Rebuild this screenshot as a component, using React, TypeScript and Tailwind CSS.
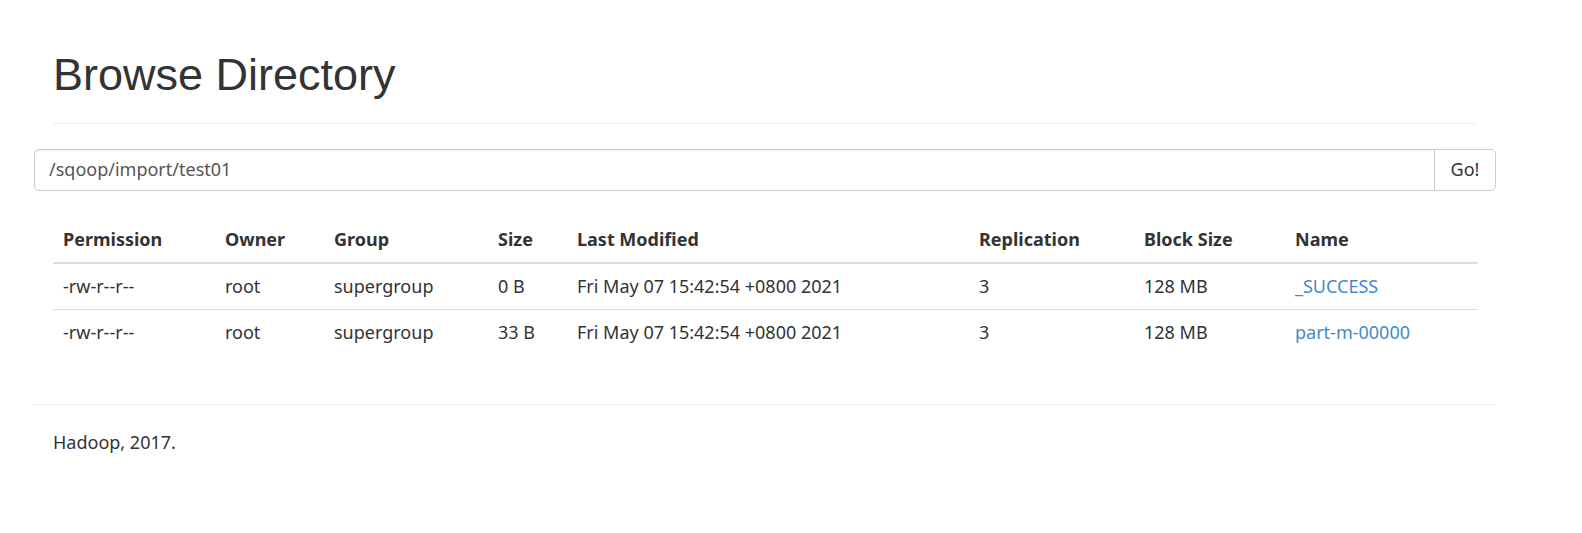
const FONT = '[font-family:"Noto_Sans","Open_Sans",sans-serif]'

const columns = [
  { label: 'Permission', width: 'w-[162px]' },
  { label: 'Owner', width: 'w-[109px]' },
  { label: 'Group', width: 'w-[164px]' },
  { label: 'Size', width: 'w-[79px]' },
  { label: 'Last Modified', width: 'w-[402px]' },
  { label: 'Replication', width: 'w-[165px]' },
  { label: 'Block Size', width: 'w-[151px]' },
  { label: 'Name', width: 'w-[193px]' },
]

const files = [
  {
    permission: '-rw-r--r--',
    owner: 'root',
    group: 'supergroup',
    size: '0 B',
    modified: 'Fri May 07 15:42:54 +0800 2021',
    replication: '3',
    blockSize: '128 MB',
    name: '_SUCCESS',
  },
  {
    permission: '-rw-r--r--',
    owner: 'root',
    group: 'supergroup',
    size: '33 B',
    modified: 'Fri May 07 15:42:54 +0800 2021',
    replication: '3',
    blockSize: '128 MB',
    name: 'part-m-00000',
  },
]

export default function App() {
  return (
    <div className={`h-[533px] overflow-hidden bg-white pt-[50px] text-[#333] text-[18px] leading-[25px] ${FONT}`}>
      <div className="ml-[34px] w-[1462px]">
        {/* page header */}
        <div className="mx-[19px] mb-[25px] border-b border-[#eee] pb-[11px]">
          <h1 className="mb-[12px] text-[45px] leading-[49.5px] font-normal [font-family:'Liberation_Sans',Arial,sans-serif]">
            Browse Directory
          </h1>
        </div>

        {/* path input */}
        <div className="flex h-[42.5px]">
          <input
            className="flex-1 min-w-0 rounded-l-[5px] border border-[#ccc] px-[14px] text-[18px] text-[#555] outline-none shadow-[inset_0_1px_1px_rgba(0,0,0,0.075)]"
            defaultValue="/sqoop/import/test01"
          />
          <button className="-ml-px w-[62px] rounded-r-[5px] border border-[#ccc] bg-white text-[18px] text-[#333]">
            Go!
          </button>
        </div>

        {/* listing */}
        <div className="px-[19px] mt-[25.5px]">
          <table className="w-[1425px] table-fixed border-collapse">
            <colgroup>
              {columns.map((c) => (
                <col key={c.label} className={c.width} />
              ))}
            </colgroup>
            <thead>
              <tr className="border-b-[2.5px] border-[#ddd]">
                {columns.map((c) => (
                  <th key={c.label} className="p-[10px] text-left font-bold">
                    {c.label}
                  </th>
                ))}
              </tr>
            </thead>
            <tbody>
              {files.map((f, i) => (
                <tr key={f.name} className={i > 0 ? 'border-t border-[#ddd]' : ''}>
                  <td className="p-[10px]">{f.permission}</td>
                  <td className="p-[10px]">{f.owner}</td>
                  <td className="p-[10px]">{f.group}</td>
                  <td className="p-[10px]">{f.size}</td>
                  <td className="p-[10px]">{f.modified}</td>
                  <td className="p-[10px]">{f.replication}</td>
                  <td className="p-[10px]">{f.blockSize}</td>
                  <td className="p-[10px]">
                    <a href="#" className="text-[#428bca]">
                      {f.name}
                    </a>
                  </td>
                </tr>
              ))}
            </tbody>
          </table>
        </div>

        {/* footer */}
        <hr className="mt-[49px] border-t border-[#eee]" />
        <p className="mt-[25px] px-[19px]">Hadoop, 2017.</p>
      </div>
    </div>
  )
}
